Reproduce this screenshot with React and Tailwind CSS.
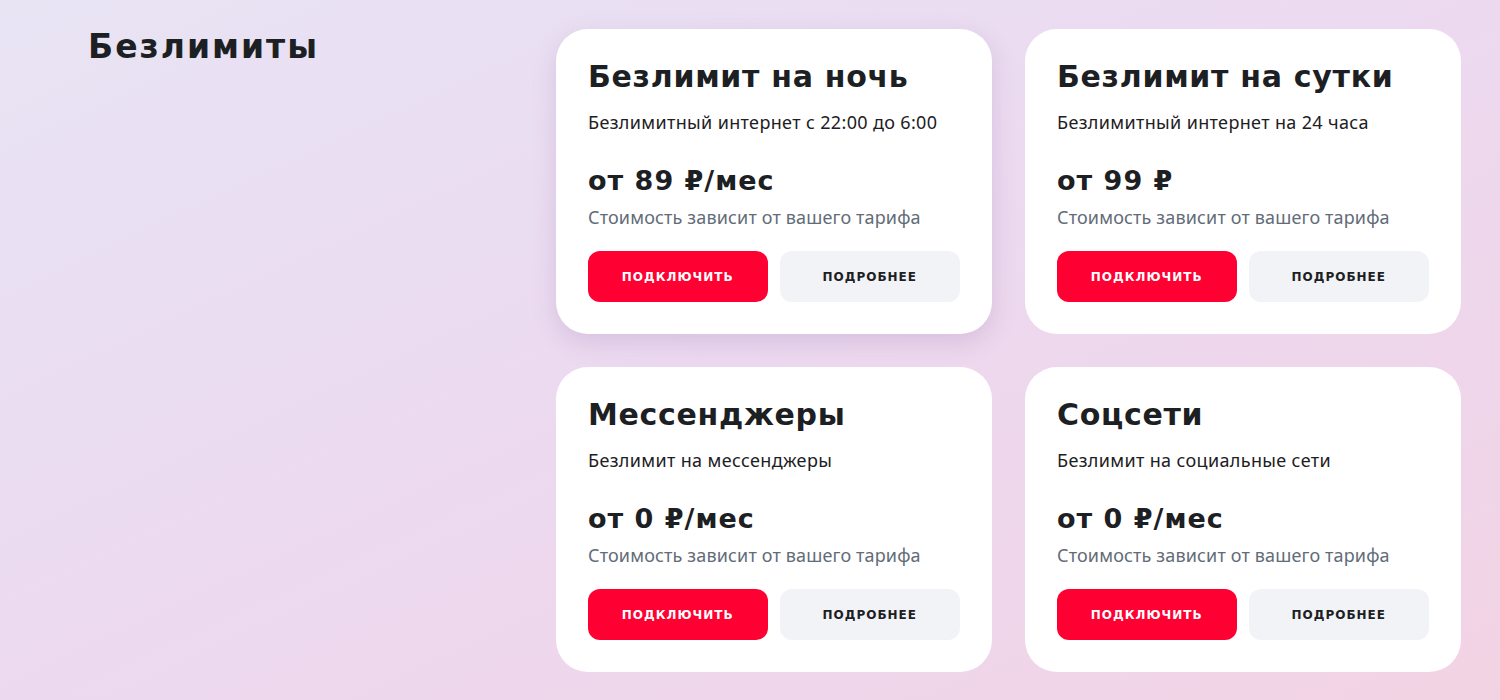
import React from 'react';

const cards = [
  {
    title: 'Безлимит на ночь',
    text: 'Безлимитный интернет с 22:00 до 6:00',
    price: 'от 89 ₽/мес',
    hover: true,
  },
  {
    title: 'Безлимит на сутки',
    text: 'Безлимитный интернет на 24 часа',
    price: 'от 99 ₽',
  },
  {
    title: 'Мессенджеры',
    text: 'Безлимит на мессенджеры',
    price: 'от 0 ₽/мес',
  },
  {
    title: 'Соцсети',
    text: 'Безлимит на социальные сети',
    price: 'от 0 ₽/мес',
  },
];

function Card({ title, text, price, hover }) {
  return (
    <div
      className={`bg-white rounded-[32px] px-8 pt-[30px] pb-8 flex flex-col ${
        hover ? 'shadow-[0_8px_24px_rgba(120,80,140,0.18)]' : ''
      }`}
    >
      <h2 className="font-['DejaVu_Sans',sans-serif] text-[30px] leading-[36px] font-bold text-[#1d2023] tracking-[0.7px]">
        {title}
      </h2>
      <p className="mt-[15px] font-['Noto_Sans',sans-serif] text-[18px] leading-6 text-[#1d2023] tracking-[0.35px]">
        {text}
      </p>
      <div className="mt-[31px] font-['DejaVu_Sans',sans-serif] text-[27px] leading-[32px] font-bold text-[#1d2023] tracking-[1px]">
        {price}
      </div>
      <p className="mt-2 font-['Noto_Sans',sans-serif] text-[18px] leading-6 text-[#626c77] tracking-[0.15px]">
        Стоимость зависит от вашего тарифа
      </p>
      <div className="mt-[22px] flex gap-3">
        <button className="w-[180px] h-[51px] rounded-xl bg-[#ff0032] text-white font-['DejaVu_Sans',sans-serif] text-[12px] font-bold tracking-[1px]">
          ПОДКЛЮЧИТЬ
        </button>
        <button className="w-[181px] h-[51px] rounded-xl bg-[#f2f3f7] text-[#1d2023] font-['DejaVu_Sans',sans-serif] text-[12px] font-bold tracking-[1px]">
          ПОДРОБНЕЕ
        </button>
      </div>
    </div>
  );
}

export default function App() {
  return (
    <div className="min-h-screen w-full bg-gradient-to-br from-[#e8e4f4] via-[#ecd9f0] to-[#f2d3e4] flex pl-[88px] pt-[29px] pb-[28px]">
      <div className="w-[468px] shrink-0">
        <h1 className="font-['DejaVu_Sans',sans-serif] text-[33px] leading-[36px] font-bold text-[#1d2023] tracking-[2px]">
          Безлимиты
        </h1>
      </div>
      <div className="grid grid-cols-[436px_436px] gap-[33px] content-start">
        {cards.map((c) => (
          <Card key={c.title} {...c} />
        ))}
      </div>
    </div>
  );
}
